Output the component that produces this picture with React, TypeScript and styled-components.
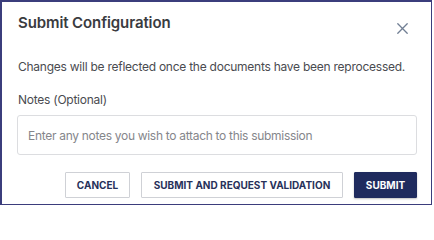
import React from "react";
import styled, { createGlobalStyle } from "styled-components";

const Global = createGlobalStyle`
  html, body { margin: 0; padding: 0; background: #ffffff; }
  * { box-sizing: border-box; }
  body { font-family: Inter, "Noto Sans", sans-serif; }
`;

const Dialog = styled.div`
  width: 432px;
  height: 205px;
  border: 2px solid #3b3d7c;
  border-right-width: 1px;
  border-bottom-width: 1px;
  background: #ffffff;
  padding: 0 14px 0 15px;
  display: flex;
  flex-direction: column;
`;

const Header = styled.div`
  display: flex;
  align-items: flex-start;
  justify-content: space-between;
  margin-top: 11px;
  height: 20px;
`;

const Title = styled.h2`
  margin: 0 0 0 1px;
  font-size: 15px;
  line-height: 20px;
  font-weight: 600;
  color: #3a3b40;
  letter-spacing: -0.1px;
`;

const CloseButton = styled.button`
  border: none;
  background: none;
  padding: 0;
  margin-right: 9px;
  margin-top: 9px;
  width: 12px;
  height: 12px;
  display: flex;
  align-items: center;
  justify-content: center;
  color: #717f94;
  cursor: pointer;
`;

const Message = styled.p`
  margin: 26px 0 0 1px;
  font-size: 12px;
  line-height: 16px;
  letter-spacing: -0.25px;
  color: #4a4b50;
  white-space: nowrap;
`;

const Label = styled.label`
  display: block;
  margin: 17px 0 0 1px;
  font-size: 12px;
  line-height: 16px;
  letter-spacing: -0.25px;
  color: #4a4b50;
`;

const NotesInput = styled.input`
  margin-top: 7px;
  width: 100%;
  height: 40px;
  border: 1px solid #dcdde0;
  border-radius: 3px;
  padding: 0 10px;
  font-family: inherit;
  font-size: 12px;
  letter-spacing: -0.3px;
  color: #333;
  outline: none;
  &::placeholder { color: #85868b; }
`;

const Actions = styled.div`
  margin-top: 17px;
  display: flex;
  justify-content: flex-end;
  gap: 11px;
`;

const Button = styled.button<{ $primary?: boolean; $w: number }>`
  height: 26px;
  width: ${(p) => p.$w}px;
  border: 1px solid ${(p) => (p.$primary ? "#1f2b5e" : "#cfd1d6")};
  background: ${(p) => (p.$primary ? "#1f2b5e" : "#ffffff")};
  color: ${(p) => (p.$primary ? "#ffffff" : "#27315a")};
  border-radius: 1px;
  font-family: inherit;
  font-size: 10px;
  font-weight: 700;
  letter-spacing: 0;
  text-transform: uppercase;
  white-space: nowrap;
  padding: 0;
  cursor: pointer;
  box-shadow: ${(p) => (p.$primary ? "0 1px 2px rgba(0,0,0,0.25)" : "none")};
`;

export default function App() {
  return (
    <>
      <Global />
      <Dialog>
        <Header>
          <Title>Submit Configuration</Title>
          <CloseButton aria-label="Close">
            <svg width="11" height="11" viewBox="0 0 11 11">
              <path d="M0.8 0.8 L10.2 10.2 M10.2 0.8 L0.8 10.2" stroke="currentColor" strokeWidth="1.3" strokeLinecap="round" />
            </svg>
          </CloseButton>
        </Header>
        <Message>Changes will be reflected once the documents have been reprocessed.</Message>
        <Label htmlFor="notes">Notes (Optional)</Label>
        <NotesInput id="notes" placeholder="Enter any notes you wish to attach to this submission" />
        <Actions>
          <Button $w={65}>Cancel</Button>
          <Button $w={202}>Submit and request validation</Button>
          <Button $primary $w={63}>Submit</Button>
        </Actions>
      </Dialog>
    </>
  );
}
